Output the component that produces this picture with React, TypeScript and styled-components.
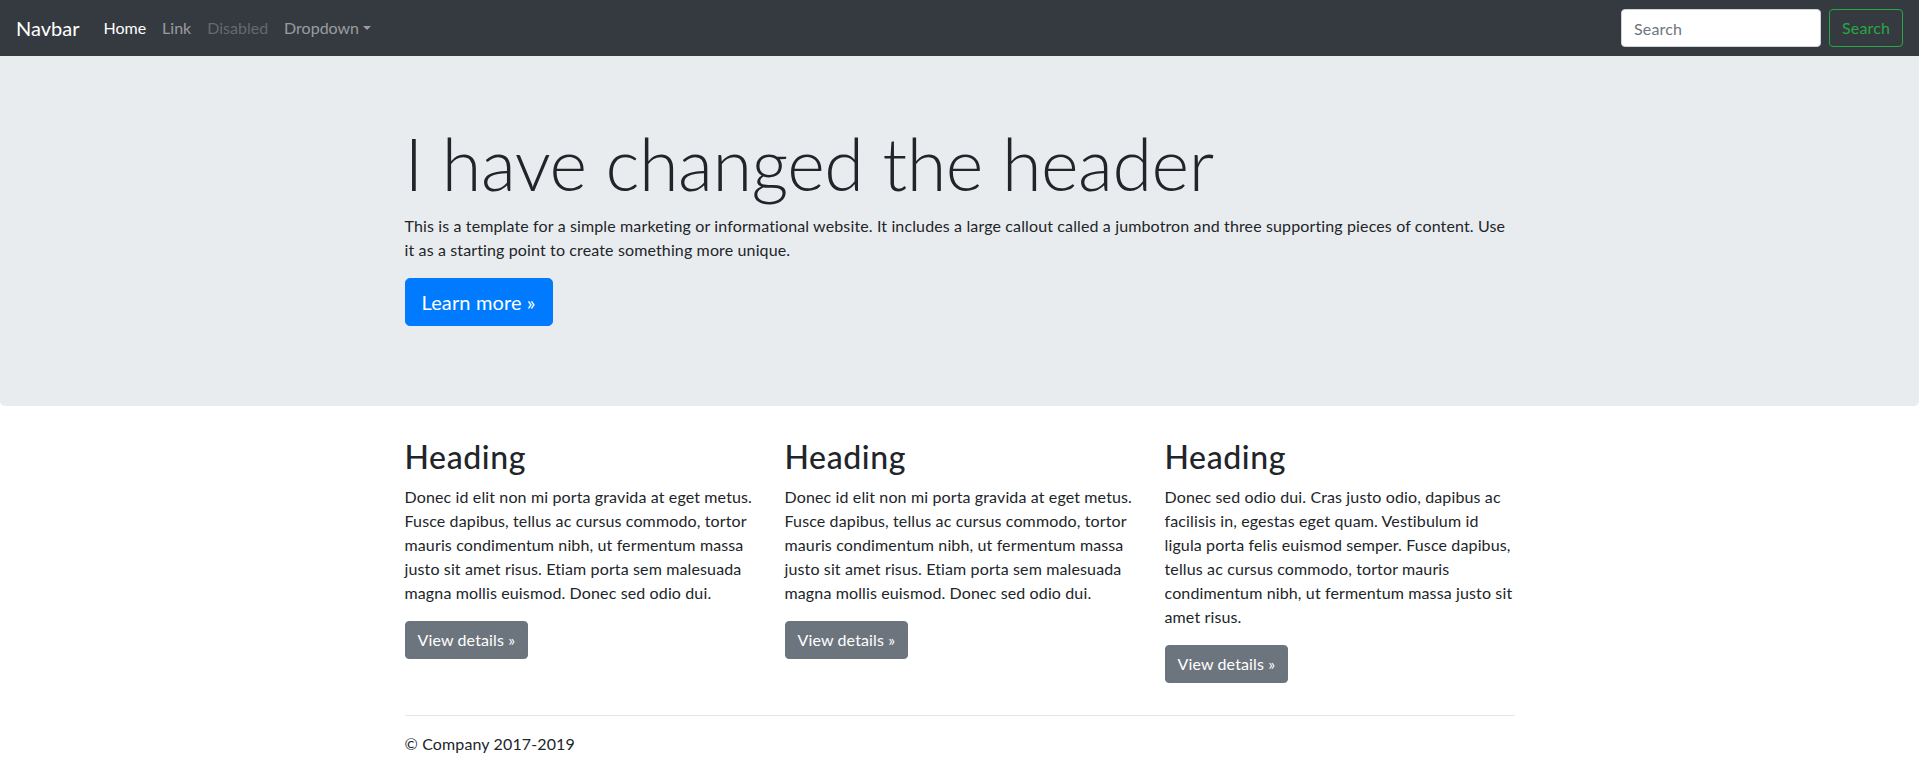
import React from "react";
import styled, { createGlobalStyle } from "styled-components";

const GlobalStyle = createGlobalStyle`
  *, *::before, *::after { box-sizing: border-box; }
  html, body { margin: 0; padding: 0; }
  body {
    font-family: Lato, "Open Sans", "Noto Sans", sans-serif;
    font-size: 16px;
    line-height: 1.5;
    letter-spacing: 0.13px;
    color: #212529;
    background: #fff;
  }
`;

const Nav = styled.nav`
  display: flex;
  align-items: center;
  justify-content: space-between;
  height: 56px;
  padding: 8px 16px;
  background: #343a40;
  letter-spacing: 0;
`;

const NavLeft = styled.div`
  display: flex;
  align-items: center;
`;

const Brand = styled.a`
  font-size: 20px;
  line-height: 30px;
  padding: 5px 0;
  margin-right: 16px;
  color: #fff;
  text-decoration: none;
`;

const NavLink = styled.a<{ $state?: "active" | "disabled" }>`
  padding: 8px;
  line-height: 24px;
  font-size: 16px;
  text-decoration: none;
  color: ${(p) =>
    p.$state === "active"
      ? "#fff"
      : p.$state === "disabled"
      ? "rgba(255,255,255,0.25)"
      : "rgba(255,255,255,0.5)"};
`;

const Caret = styled.span`
  display: inline-block;
  margin-left: 0.255em;
  vertical-align: 0.255em;
  border-top: 0.3em solid;
  border-right: 0.3em solid transparent;
  border-left: 0.3em solid transparent;
  border-bottom: 0;
`;

const SearchForm = styled.form`
  display: flex;
  align-items: center;
  gap: 8px;
`;

const SearchInput = styled.input`
  width: 200px;
  height: 38px;
  padding: 6px 12px;
  font-family: inherit;
  font-size: 16px;
  line-height: 1.5;
  letter-spacing: 0.13px;
  color: #495057;
  background: #fff;
  border: 1px solid #ced4da;
  border-radius: 4px;
  &::placeholder { color: #6c757d; }
`;

const OutlineButton = styled.button`
  height: 38px;
  padding: 6px 12px;
  font-family: inherit;
  font-size: 16px;
  line-height: 1.5;
  letter-spacing: 0.13px;
  color: #28a745;
  background: transparent;
  border: 1px solid #28a745;
  border-radius: 4px;
`;

const Jumbotron = styled.section`
  background: #e9ecef;
  padding: 64px 0;
  margin-bottom: 32px;
  border-radius: 0 0 4.8px 4.8px;
`;

const Container = styled.div`
  max-width: 1140px;
  margin: 0 auto;
  padding: 0 15px;
`;

const Display = styled.h1`
  margin: 0 0 8px;
  font-size: 72px;
  font-weight: 300;
  line-height: 1.2;
  letter-spacing: -0.5px;
`;

const Para = styled.p`
  margin: 0 0 16px;
`;

const Button = styled.a<{ $variant: "primary" | "secondary"; $lg?: boolean }>`
  display: inline-block;
  padding: ${(p) => (p.$lg ? "8px 16px" : "6px 12px")};
  font-size: ${(p) => (p.$lg ? "20px" : "16px")};
  line-height: 1.5;
  border-radius: ${(p) => (p.$lg ? "4.8px" : "4px")};
  color: #fff;
  text-decoration: none;
  background: ${(p) => (p.$variant === "primary" ? "#007bff" : "#6c757d")};
  border: 1px solid ${(p) => (p.$variant === "primary" ? "#007bff" : "#6c757d")};
`;

const Row = styled.div`
  display: grid;
  grid-template-columns: repeat(3, 1fr);
  column-gap: 30px;
`;

const Col = styled.div``;

const Heading = styled.h2`
  margin: 0 0 8px;
  font-size: 32px;
  font-weight: 500;
  line-height: 1.2;
  letter-spacing: 0.6px;
`;

const Rule = styled.hr`
  margin: 16px 0;
  border: 0;
  border-top: 1px solid rgba(0, 0, 0, 0.1);
`;

const cols = [
  "Donec id elit non mi porta gravida at eget metus. Fusce dapibus, tellus ac cursus commodo, tortor mauris condimentum nibh, ut fermentum massa justo sit amet risus. Etiam porta sem malesuada magna mollis euismod. Donec sed odio dui.",
  "Donec id elit non mi porta gravida at eget metus. Fusce dapibus, tellus ac cursus commodo, tortor mauris condimentum nibh, ut fermentum massa justo sit amet risus. Etiam porta sem malesuada magna mollis euismod. Donec sed odio dui.",
  "Donec sed odio dui. Cras justo odio, dapibus ac facilisis in, egestas eget quam. Vestibulum id ligula porta felis euismod semper. Fusce dapibus, tellus ac cursus commodo, tortor mauris condimentum nibh, ut fermentum massa justo sit amet risus.",
];

export default function App() {
  return (
    <>
      <GlobalStyle />
      <Nav>
        <NavLeft>
          <Brand href="#">Navbar</Brand>
          <NavLink href="#" $state="active">Home</NavLink>
          <NavLink href="#">Link</NavLink>
          <NavLink href="#" $state="disabled">Disabled</NavLink>
          <NavLink href="#">
            Dropdown<Caret />
          </NavLink>
        </NavLeft>
        <SearchForm onSubmit={(e) => e.preventDefault()}>
          <SearchInput type="text" placeholder="Search" aria-label="Search" />
          <OutlineButton type="submit">Search</OutlineButton>
        </SearchForm>
      </Nav>
      <main>
        <Jumbotron>
          <Container>
            <Display>I have changed the header</Display>
            <Para>
              This is a template for a simple marketing or informational website. It includes a large
              callout called a jumbotron and three supporting pieces of content. Use it as a starting
              point to create something more unique.
            </Para>
            <Para>
              <Button href="#" $variant="primary" $lg>
                Learn more »
              </Button>
            </Para>
          </Container>
        </Jumbotron>
        <Container>
          <Row>
            {cols.map((t, i) => (
              <Col key={i}>
                <Heading>Heading</Heading>
                <Para>{t}</Para>
                <Para>
                  <Button href="#" $variant="secondary">
                    View details »
                  </Button>
                </Para>
              </Col>
            ))}
          </Row>
          <Rule />
        </Container>
      </main>
      <Container as="footer">
        <Para>© Company 2017-2019</Para>
      </Container>
    </>
  );
}
